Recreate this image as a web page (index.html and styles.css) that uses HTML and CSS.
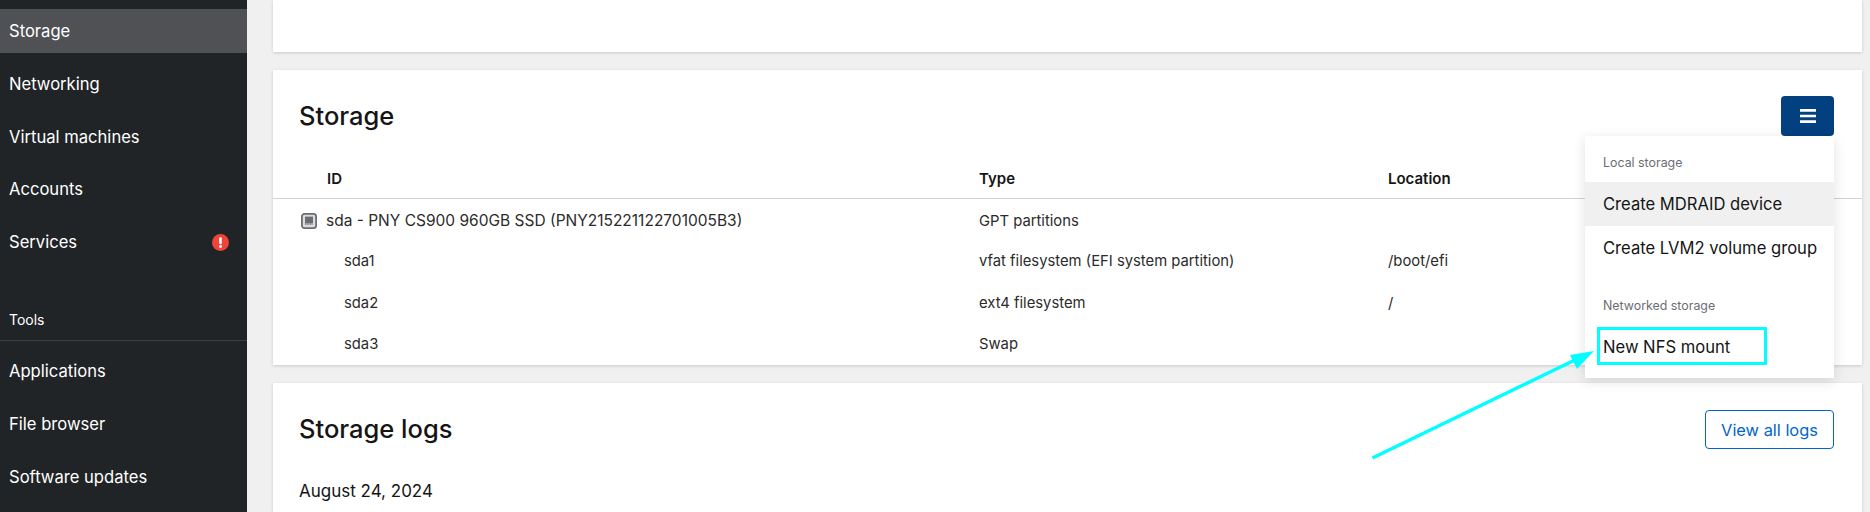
FILE: index.html
```html
<!DOCTYPE html>
<html lang="en">
<head>
<meta charset="utf-8">
<title>Storage</title>
<link rel="stylesheet" href="styles.css">
</head>
<body>
<div class="page">
  <nav class="sidebar">
    <ul class="nav-group">
      <li class="nav-item active">Storage</li>
      <li class="nav-item">Networking</li>
      <li class="nav-item">Virtual machines</li>
      <li class="nav-item">Accounts</li>
      <li class="nav-item">Services
        <svg class="badge" viewBox="0 0 16 16"><circle cx="8" cy="8" r="8" fill="#f0443a"/><rect x="6.8" y="3" width="2.4" height="6.6" rx="1" fill="#fff"/><circle cx="8" cy="11.8" r="1.4" fill="#fff"/></svg>
      </li>
    </ul>
    <div class="nav-heading">Tools</div>
    <ul class="nav-group">
      <li class="nav-item">Applications</li>
      <li class="nav-item">File browser</li>
      <li class="nav-item">Software updates</li>
    </ul>
  </nav>
  <main class="main">
    <section class="card card-top"></section>
    <section class="card card-storage">
      <header class="card-head">
        <h2 class="card-title">Storage</h2>
        <button class="menu-btn" aria-label="Menu">
          <svg viewBox="0 0 16 14" class="menu-icon"><path d="M0 1.4h16M0 7h16M0 12.6h16" stroke="#fff" stroke-width="2.7"/></svg>
        </button>
      </header>
      <div class="table">
        <div class="row row-head"><div class="cell cell-id">ID</div><div class="cell">Type</div><div class="cell">Location</div></div>
        <div class="row row-disk"><div class="cell cell-id cell-disk">
          <svg class="disk" viewBox="0 0 16 16"><rect x=".9" y=".9" width="14.2" height="14.2" rx="2.6" fill="#dcdcde" stroke="#6a6e73" stroke-width="1.8"/><path d="M4 3.6h8v6.6H4z" fill="#6a6e73"/><path d="M4.6 10v2M6.2 10v2M7.8 10v2M9.4 10v2M11 10v2" stroke="#6a6e73" stroke-width=".8"/></svg>
          sda - PNY CS900 960GB SSD (PNY215221122701005B3)</div><div class="cell">GPT partitions</div><div class="cell"></div></div>
        <div class="row"><div class="cell cell-id cell-part">sda1</div><div class="cell">vfat filesystem (EFI system partition)</div><div class="cell">/boot/efi</div></div>
        <div class="row"><div class="cell cell-id cell-part">sda2</div><div class="cell">ext4 filesystem</div><div class="cell">/</div></div>
        <div class="row"><div class="cell cell-id cell-part">sda3</div><div class="cell">Swap</div><div class="cell"></div></div>
      </div>
      <div class="menu">
        <div class="menu-label">Local storage</div>
        <div class="menu-item hover">Create MDRAID device</div>
        <div class="menu-item">Create LVM2 volume group</div>
        <div class="menu-label menu-label-2">Networked storage</div>
        <div class="menu-item">New NFS mount</div>
      </div>
    </section>
    <section class="card card-logs">
      <header class="card-head logs-head">
        <h2 class="card-title">Storage logs</h2>
        <button class="logs-btn">View all logs</button>
      </header>
      <p class="log-date">August 24, 2024</p>
    </section>
  </main>
</div>
<svg class="annotation" viewBox="0 0 1870 512" aria-hidden="true">
  <rect x="1598.5" y="328.5" width="167" height="35" fill="none" stroke="#00ffff" stroke-width="3"/>
  <path d="M1372.5 458 L1578 358.5" stroke="#00ffff" stroke-width="3.5" fill="none"/>
  <path d="M1594 351 L1570 355 L1577 369 Z" fill="#00ffff"/>
</svg>
</body>
</html>
```
FILE: styles.css
```css
* { box-sizing: border-box; }
html, body { margin: 0; height: 512px; overflow: hidden; }
body { font-family: "Inter", "Liberation Sans", sans-serif; color: #151515; background: #f0f0f0; position: relative; }
.page { display: flex; height: 512px; overflow: hidden; }

.sidebar { width: 247px; flex: none; background: #212427; color: #fff; padding-top: 9px; font-size: 16.6px; }
.nav-group { list-style: none; margin: 0; padding: 0; }
.nav-item { height: 44px; margin-bottom: 8.8px; padding-left: 9px; display: flex; align-items: center; justify-content: space-between; padding-right: 18px; }
.nav-item.active { background: #4f5155; }
.badge { width: 17px; height: 17px; }
.nav-heading { margin-top: 37px; height: 40px; padding: 10px 0 0 9px; font-size: 14px; border-bottom: 1px solid #3c3f42; margin-bottom: 8px; }

.main { flex: 1; padding: 0 8px 0 26px; display: flex; flex-direction: column; gap: 18px; }
.card { background: #fff; box-shadow: 0 1px 3px rgba(3,3,3,.16); flex: none; }
.card-top { height: 52px; }
.card-storage { height: 295px; position: relative; }
.card-head { display: flex; justify-content: space-between; align-items: flex-start; padding: 26px 28px 0 26px; height: 94px; }
.card-title { margin: 0; font-size: 25.5px; font-weight: 500; line-height: 40px; }
.menu-btn { width: 53px; height: 40px; background: #034080; border: 0; border-radius: 4px; padding: 0; display: flex; align-items: center; justify-content: center; }
.menu-icon { width: 16px; height: 14px; display: block; }

.table { font-size: 14.8px; color: #2b2b2b; }
.row { display: grid; grid-template-columns: 706px 409px 1fr; height: 41.5px; align-items: center; }
.row-head { height: 35px; font-size: 15px; font-weight: 600; color: #151515; border-bottom: 1px solid #d2d2d2; align-items: start; padding-top: 5px; }
.row-disk { padding-top: 2px; }
.cell-id { padding-left: 54px; }
.cell-disk { padding-left: 28px; display: flex; align-items: center; gap: 9px; font-size: 15.5px; }
.cell-part { padding-left: 71px; }
.disk { width: 16px; height: 16px; flex: none; }

.menu { position: absolute; left: 1312px; top: 66px; width: 249px; height: 242px; background: #fff; box-shadow: 0 3px 12px rgba(3,3,3,.12); font-size: 16.6px; z-index: 2; }
.menu-label { font-size: 12.4px; color: #6a6e73; padding: 18px 18px 0; height: 46px; line-height: 18px; }
.menu-label-2 { padding-top: 27px; height: 55px; }
.menu-item { height: 44px; padding: 0 18px; display: flex; align-items: center; white-space: nowrap; }
.menu-item.hover { background: #f0f0f0; }

.card-logs { flex: 1; }
.logs-head { height: 94px; }
.logs-btn { width: 129px; height: 39px; background: #fff; border: 1px solid #06c; border-radius: 4px; color: #06c; font: inherit; font-size: 16.4px; margin-top: 1px; padding: 0; }
.log-date { margin: 0; padding-left: 26px; font-size: 17px; line-height: 28px; }

.annotation { position: absolute; left: 0; top: 0; width: 1870px; height: 512px; pointer-events: none; z-index: 5; }
```
